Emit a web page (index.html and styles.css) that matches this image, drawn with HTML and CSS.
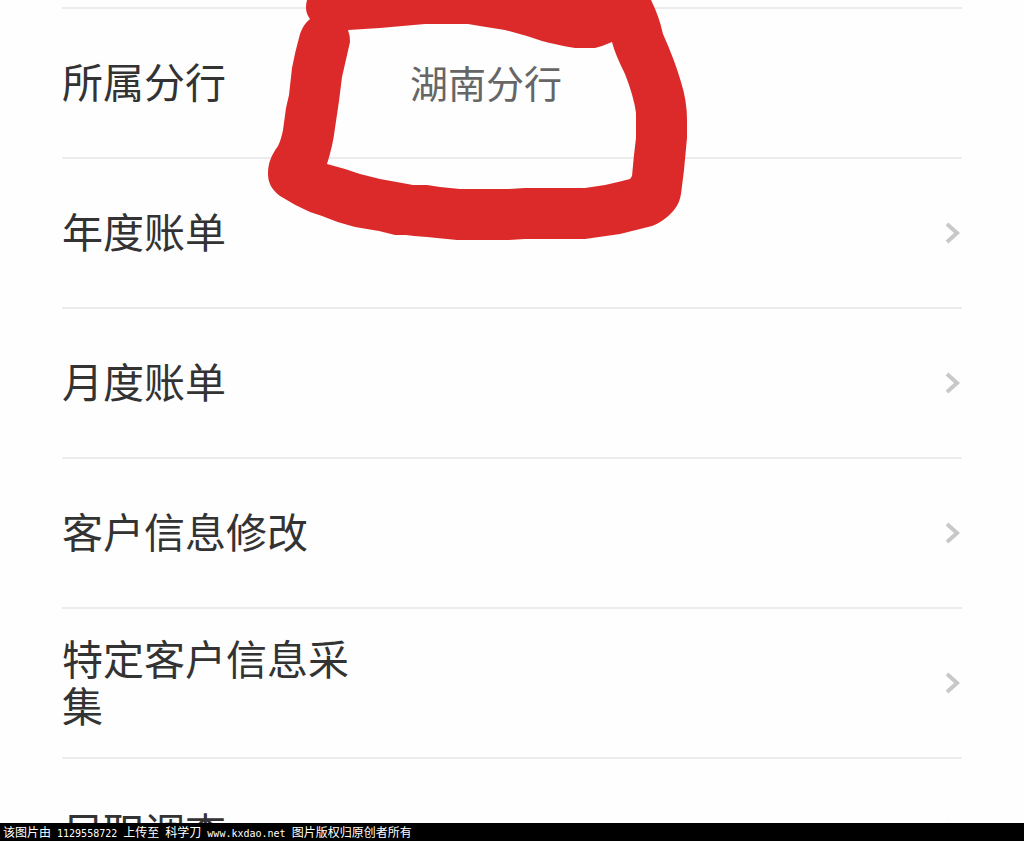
FILE: index.html
```html
<!DOCTYPE html>
<html lang="zh-CN">
<head>
<meta charset="utf-8">
<meta name="viewport" content="width=device-width, initial-scale=1">
<title>客户信息</title>
<link rel="stylesheet" href="styles.css">
</head>
<body>
<main class="page">
  <ul class="list">
    <li class="row">
      <span class="label">所属分行</span>
      <span class="value">湖南分行</span>
    </li>
    <li><a class="row" href="#annual"><span class="label">年度账单</span><svg class="chevron" viewBox="0 0 16 24" aria-hidden="true"><path d="M1 3 11 12 1 21"/></svg></a></li>
    <li><a class="row" href="#monthly"><span class="label">月度账单</span><svg class="chevron" viewBox="0 0 16 24" aria-hidden="true"><path d="M1 3 11 12 1 21"/></svg></a></li>
    <li><a class="row" href="#edit"><span class="label">客户信息修改</span><svg class="chevron" viewBox="0 0 16 24" aria-hidden="true"><path d="M1 3 11 12 1 21"/></svg></a></li>
    <li><a class="row" href="#collect"><span class="label">特定客户信息采集</span><svg class="chevron" viewBox="0 0 16 24" aria-hidden="true"><path d="M1 3 11 12 1 21"/></svg></a></li>
    <li><a class="row" href="#survey"><span class="label">尽职调查</span><svg class="chevron" viewBox="0 0 16 24" aria-hidden="true"><path d="M1 3 11 12 1 21"/></svg></a></li>
  </ul>
  <svg class="marker" viewBox="0 0 440 250" aria-hidden="true">
    <path fill-rule="evenodd" d="M47 0C45 8 46 14 50 19C45 23 42 28 40 34Q35 52 32 68L29 95L26 108L23 130Q21 140 18 146C11 156 8 163 8 174C8 183 12 190 20 196Q34 205 50 212L62 216Q78 223 95 227L119 231L135 235L146 235L154 236L167 237L197 240L249 240L265 239L325 239L360 234L392 226C402 222 409 216 414 210C418 205 420 200 421 194L424 170L427 138L427 120Q427 101 421 82Q415 61 403 34Q399 16 391 0ZM88 30L120 28L165 24L208 24L226 27L245 30Q265 35 282 41Q310 48 317 48L335 48L342 46L352 42Q355 54 365 74Q374 97 376 113L376 138L374 155L372 176L370 179L358 182L345 185L325 188L265 188L249 189L200 189L180 187L167 185L153 185L142 183L120 179L100 174L85 169L67 164Q73 145 75 128L79 101L82 77L90 42Q90 35 88 30Z"/>
  </svg>
</main>
<footer class="credit"><span class="cjk">该图片由</span> 1129558722 <span class="cjk">上传至</span> <span class="cjk">科学刀</span> www.kxdao.net <span class="cjk">图片版权归原创者所有</span></footer>
</body>
</html>
```
FILE: styles.css
```css
* {
  box-sizing: border-box;
}

body {
  margin: 0;
  height: 100vh;
  display: flex;
  flex-direction: column;
  overflow: hidden;
  background: #fefefe;
  color: #333;
  font-family: "Noto Sans CJK SC", sans-serif;
}

.page {
  position: relative;
  flex: 1;
  min-height: 0;
  overflow: hidden;
  padding: 7px 62px 0;
}

.list {
  margin: 0;
  padding: 0;
  list-style: none;
}

.row {
  display: grid;
  grid-template-columns: 300px 1fr auto;
  column-gap: 48px;
  align-items: center;
  min-height: 150px;
  border-top: 2px solid #ebebeb;
  color: inherit;
  text-decoration: none;
}

.label {
  padding-bottom: 5px;
  font-size: 41px;
  line-height: 47px;
}

.value {
  padding-bottom: 3px;
  color: #666;
  font-size: 38px;
  line-height: 47px;
}

.chevron {
  grid-column: 3;
  width: 16px;
  height: 24px;
  fill: none;
  stroke: #c8c8c8;
  stroke-width: 4;
}

.marker {
  position: absolute;
  top: 0;
  left: 260px;
  width: 440px;
  height: 250px;
  fill: #dc2a2a;
  pointer-events: none;
}

.credit {
  height: 18px;
  padding: 0 3px;
  background: #000;
  color: #fff;
  font-family: "DejaVu Sans Mono", monospace;
  font-size: 10px;
  line-height: 18px;
  white-space: nowrap;
}

.cjk {
  font-family: "Noto Sans CJK SC", sans-serif;
  font-size: 12px;
}
```
